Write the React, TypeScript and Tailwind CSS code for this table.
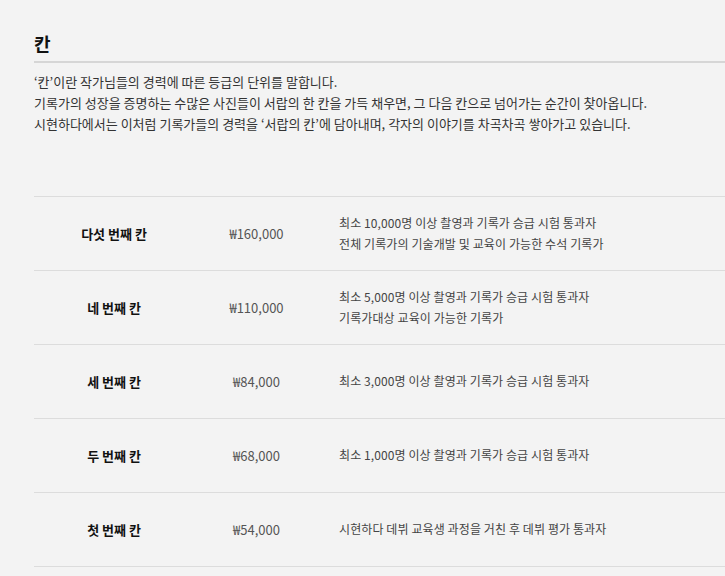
import React from "react";

const rows = [
  { name: "다섯 번째 칸", price: "₩160,000", desc: ["최소 10,000명 이상 촬영과 기록가 승급 시험 통과자", "전체 기록가의 기술개발 및 교육이 가능한 수석 기록가"] },
  { name: "네 번째 칸", price: "₩110,000", desc: ["최소 5,000명 이상 촬영과 기록가 승급 시험 통과자", "기록가대상 교육이 가능한 기록가"] },
  { name: "세 번째 칸", price: "₩84,000", desc: ["최소 3,000명 이상 촬영과 기록가 승급 시험 통과자"] },
  { name: "두 번째 칸", price: "₩68,000", desc: ["최소 1,000명 이상 촬영과 기록가 승급 시험 통과자"] },
  { name: "첫 번째 칸", price: "₩54,000", desc: ["시현하다 데뷔 교육생 과정을 거친 후 데뷔 평가 통과자"] },
];

export default function App() {
  return (
    <div
      className="min-h-[576px] w-full bg-[#f3f3f3] pl-[34px] pt-[30px]"
      style={{ fontFamily: '"Noto Sans CJK KR", "Noto Sans", sans-serif' }}
    >
      <h2 className="text-[18px] font-bold leading-[27px] text-[#111]">칸</h2>
      <div className="mt-[4px] h-[2px] w-full bg-[#d6d6d6]" />
      <div className="mt-[8px] text-[13px] leading-[21px] text-[#333]">
        <p>‘칸’이란 작가님들의 경력에 따른 등급의 단위를 말합니다.</p>
        <p>기록가의 성장을 증명하는 수많은 사진들이 서랍의 한 칸을 가득 채우면, 그 다음 칸으로 넘어가는 순간이 찾아옵니다.</p>
        <p>시현하다에서는 이처럼 기록가들의 경력을 ‘서랍의 칸’에 담아내며, 각자의 이야기를 차곡차곡 쌓아가고 있습니다.</p>
      </div>
      <div className="mt-[62px] border-t border-[#dcdcdc]">
        {rows.map((r) => (
          <div key={r.name} className="flex h-[74px] items-center border-b border-[#dcdcdc]">
            <div className="w-[160px] text-center text-[13px] font-bold text-[#111]">{r.name}</div>
            <div className="w-[125px] text-center text-[13px] text-[#555]">{r.price}</div>
            <div className="-mt-[2px] pl-[20px] text-[12px] leading-[21px] tracking-[0.1px] text-[#444]">
              {r.desc.map((d) => (
                <p key={d}>{d}</p>
              ))}
            </div>
          </div>
        ))}
      </div>
    </div>
  );
}
